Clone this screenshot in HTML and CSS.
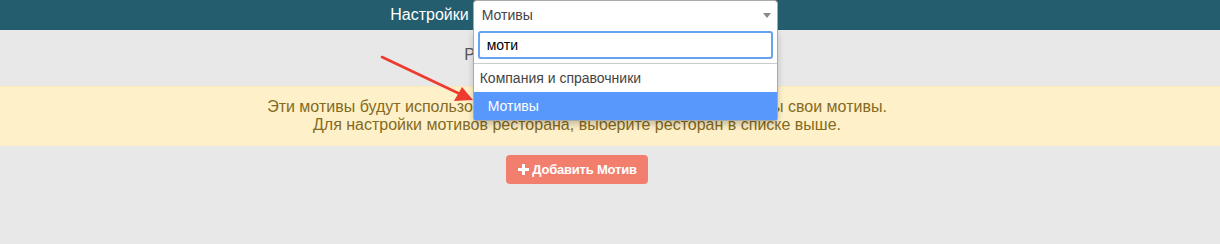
FILE: index.html
```html
<!DOCTYPE html>
<html lang="ru">
<head>
  <meta charset="UTF-8">
  <title>Настройки</title>
  <link rel="stylesheet" href="styles.css">
</head>
<body>
  <div class="topbar">
    <span class="topbar-title">Настройки</span>
    <div class="picker">
      <div class="picker-value">
        <span>Мотивы</span>
        <span class="picker-caret"></span>
      </div>
      <!-- открытый список -->
      <div class="picker-drop">
        <div class="picker-search">
          <input type="text" value="моти">
        </div>
        <ul class="picker-results">
          <li>Компания и справочники</li>
          <li class="active">Мотивы</li>
        </ul>
      </div>
    </div>
  </div>

  <div class="rest-row">
    <span class="rest-label">Ресторан</span>
    <span class="rest-select"></span>
  </div>

  <div class="notice">
    Эти мотивы будут использованы для всех ресторанов, где не заданы свои мотивы.<br>
    Для настройки мотивов ресторана, выберите ресторан в списке выше.
  </div>

  <div class="actions">
    <button class="add-button">
      <svg class="plus" width="11" height="11" viewBox="0 0 11 11"><path d="M4 0h3v4h4v3H7v4H4V7H0V4h4z" fill="#fff"/></svg>
      Добавить Мотив
    </button>
  </div>

  <svg class="pointer" width="120" height="70" viewBox="0 0 120 70">
    <line x1="12" y1="7" x2="90" y2="44" stroke="#ee3b2f" stroke-width="2.6" stroke-linecap="round"/>
    <path d="M103 50 L84 51 L92 37 Z" fill="#ee3b2f"/>
  </svg>
</body>
</html>
```

FILE: styles.css
```css
body {
  margin: 0;
  padding: 0;
  font-family: "Liberation Sans", Arial, sans-serif;
  font-size: 14px;
  background-color: #e8e8e8;
  color: #333;
  height: 244px;
  overflow: hidden;
}

/* Шапка */
.topbar {
  height: 30px;
  background-color: #235d6e;
  display: flex;
  align-items: flex-start;
  justify-content: center;
  padding-right: 52px;
}

.topbar-title {
  color: #fff;
  font-size: 16px;
  line-height: 30px;
  margin-right: 4px;
}

.picker {
  position: relative;
  width: 305px;
  z-index: 10;
}

.picker-value {
  height: 29px;
  box-sizing: border-box;
  background: #fff;
  border: 1px solid #aaa;
  border-bottom: none;
  border-radius: 4px 4px 0 0;
  display: flex;
  align-items: center;
  justify-content: space-between;
  padding: 0 6px 0 8px;
  color: #444;
  font-size: 14px;
}

.picker-caret {
  width: 0;
  height: 0;
  border-left: 4px solid transparent;
  border-right: 4px solid transparent;
  border-top: 5px solid #888;
  margin-top: 1px;
}

.picker-drop {
  position: absolute;
  top: 29px;
  left: 0;
  right: 0;
  background: #fff;
  border: 1px solid #aaa;
  border-top: none;
  border-radius: 0 0 4px 4px;
  box-shadow: 0 4px 6px rgba(0,0,0,0.2);
}

.picker-search {
  padding: 2px 4px 4px 4px;
}

.picker-search input {
  width: 100%;
  height: 28px;
  box-sizing: border-box;
  border: 2px solid #66a3f0;
  border-radius: 3px;
  padding: 0 7px;
  font-family: "Liberation Sans", Arial, sans-serif;
  font-size: 14px;
  color: #000;
  outline: none;
}

.picker-results {
  list-style: none;
  margin: 0;
  padding: 0;
  border-top: 1px solid #ccc;
}

.picker-results li {
  height: 28px;
  line-height: 28px;
  padding-left: 6px;
  font-size: 14px;
  color: #444;
}

.picker-results li.active {
  background-color: #5897fb;
  color: #fff;
  padding-left: 14px;
}

/* Выбор ресторана */
.rest-row {
  display: flex;
  justify-content: center;
  align-items: center;
  height: 40px;
  margin-top: 5px;
}

.rest-label {
  color: #555;
  font-size: 16px;
}

.rest-select {
  display: inline-block;
  width: 218px;
  height: 28px;
  margin-left: 4px;
}

/* Предупреждение */
.notice {
  margin-top: 11px;
  background-color: #fef1c9;
  border-top: 1px solid #fbeab8;
  color: #846a22;
  text-align: center;
  font-size: 16px;
  line-height: 18px;
  padding: 11px 66px 12px 0;
}

.actions {
  display: flex;
  justify-content: center;
  margin-top: 9px;
  padding-right: 66px;
}

.add-button {
  display: flex;
  align-items: center;
  gap: 3px;
  height: 29px;
  padding: 0 11px 0 12px;
  background-color: #f27f6e;
  color: #fff;
  border: none;
  border-radius: 4px;
  font-family: "Liberation Sans", Arial, sans-serif;
  font-size: 13px;
  font-weight: bold;
  letter-spacing: -0.2px;
}

.pointer {
  position: absolute;
  left: 370px;
  top: 50px;
}
```
